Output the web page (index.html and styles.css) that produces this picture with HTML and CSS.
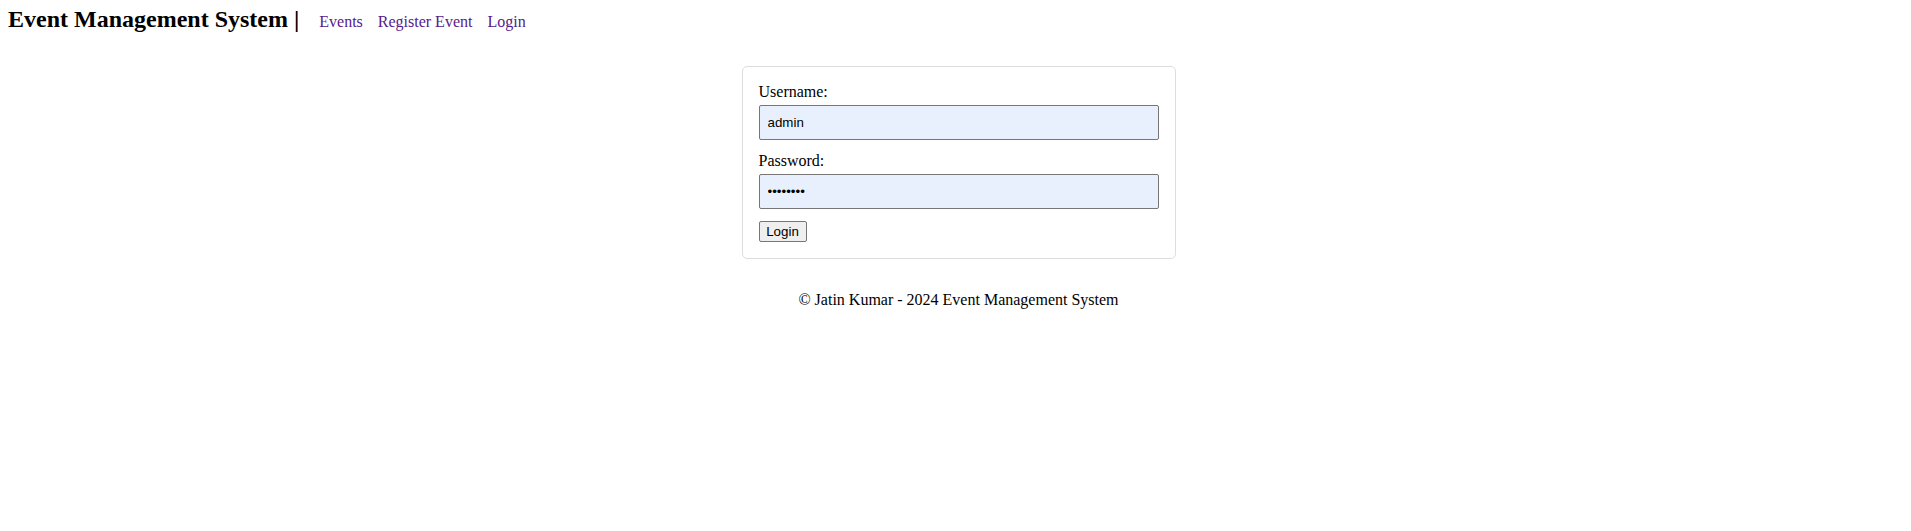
FILE: index.html
```html
<!DOCTYPE html>
<html lang="en">
<head>
<meta charset="utf-8">
<title>Login - Event Management System</title>
<link rel="stylesheet" href="styles.css">
</head>
<body>
<header class="site-header">
  <h1 class="brand">Event Management System |</h1>
  <nav class="nav">
    <a href="#" class="nav-link">Events</a>
    <a href="#" class="nav-link">Register Event</a>
    <a href="#" class="nav-link">Login</a>
  </nav>
</header>
<main class="page">
  <form class="card">
    <label class="field-label" for="username">Username:</label>
    <input class="field-input" id="username" type="text" value="admin">
    <label class="field-label" for="password">Password:</label>
    <input class="field-input" id="password" type="password" value="password">
    <button class="btn" type="button">Login</button>
  </form>
  <footer class="footer">© Jatin Kumar - 2024 Event Management System</footer>
</main>
</body>
</html>
```

FILE: styles.css
```css
html, body {
  margin: 0;
  padding: 0;
  background: #fff;
}
body {
  font-family: "Liberation Serif", "Times New Roman", serif;
  font-size: 16px;
  color: #000;
}
.site-header {
  display: flex;
  align-items: baseline;
  padding: 1px 8px 0;
  height: 35px;
}
.brand {
  margin: 0;
  font-size: 24px;
  font-weight: bold;
  line-height: 36px;
}
.nav {
  display: flex;
  gap: 15px;
  margin-left: 20px;
}
.nav-link {
  color: #551a8b;
  text-decoration: none;
}
.page {
  padding-left: 6px;
  display: flex;
  flex-direction: column;
  align-items: center;
}
.card {
  margin-top: 30px;
  width: 400px;
  padding: 16px;
  border: 1px solid #ddd;
  border-radius: 5px;
  display: flex;
  flex-direction: column;
  align-items: flex-start;
}
.field-label {
  display: block;
  line-height: 18px;
  margin-bottom: 4px;
}
.field-input {
  box-sizing: border-box;
  width: 400px;
  height: 35px;
  padding: 0 8px;
  margin: 0 0 12px 0;
  border: 1px solid #767676;
  border-radius: 2px;
  background: #e8f0fe;
  font-family: "Liberation Sans", Arial, sans-serif;
  font-size: 13.33px;
  color: #000;
}
.btn {
  font-family: "Liberation Sans", Arial, sans-serif;
  font-size: 13.33px;
  height: 21px;
  width: 48px;
  padding: 1px 6px;
  margin: 0;
  border: 1px solid #767676;
  border-radius: 2px;
  background: #efefef;
  color: #000;
}
.footer {
  margin-top: 32px;
  line-height: 18px;
  text-align: center;
}
```
